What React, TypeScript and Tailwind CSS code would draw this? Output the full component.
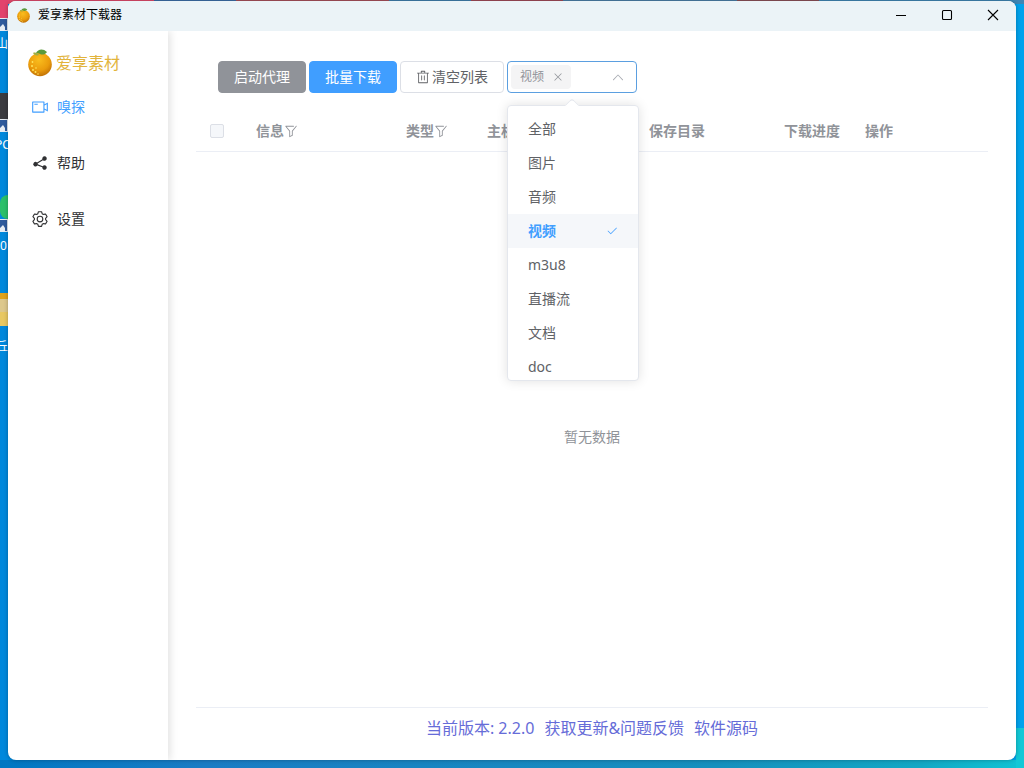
import { useState } from "react";
import type { ReactNode } from "react";

const icons = {
  video:
    "M704 768V256H128v512zm64-416 192-96v512l-192-96v128a32 32 0 0 1-32 32H96a32 32 0 0 1-32-32V224a32 32 0 0 1 32-32h640a32 32 0 0 1 32 32zm0 71.552v176.896l128 64V359.552zM192 320h192v64H192z",
  share:
    "m679.872 348.8-301.76 188.608a127.808 127.808 0 0 1 5.12 52.16l279.936 104.96a128 128 0 1 1-22.464 59.904l-279.872-104.96a128 128 0 1 1-16.64-166.272l301.696-188.608a128 128 0 1 1 33.92 54.272z",
  setting:
    "M600.704 64a32 32 0 0 1 30.464 22.208l35.2 109.376c14.784 7.232 28.928 15.36 42.432 24.512l112.384-24.192a32 32 0 0 1 34.432 15.36L944.32 364.8a32 32 0 0 1-4.032 37.504l-77.12 85.12a357.12 357.12 0 0 1 0 49.024l77.12 85.248a32 32 0 0 1 4.032 37.504l-88.704 153.6a32 32 0 0 1-34.432 15.296L708.8 803.904c-13.44 9.088-27.648 17.28-42.368 24.512l-35.264 109.376A32 32 0 0 1 600.704 960H423.296a32 32 0 0 1-30.464-22.208L357.696 828.48a351.616 351.616 0 0 1-42.56-24.64l-112.32 24.256a32 32 0 0 1-34.432-15.36L79.68 659.2a32 32 0 0 1 4.032-37.504l77.12-85.248a357.12 357.12 0 0 1 0-48.896l-77.12-85.248A32 32 0 0 1 79.68 364.8l88.704-153.6a32 32 0 0 1 34.432-15.296l112.32 24.256c13.568-9.152 27.776-17.408 42.56-24.64l35.2-109.312A32 32 0 0 1 423.232 64H600.64zm-23.424 64H446.72l-36.352 113.088-24.512 11.968a294.113 294.113 0 0 0-34.816 20.096l-22.656 15.36-116.224-25.088-65.28 113.152 79.68 88.192-1.92 27.136a293.12 293.12 0 0 0 0 40.192l1.92 27.136-79.808 88.192 65.344 113.152 116.224-25.024 22.656 15.296a294.113 294.113 0 0 0 34.816 20.096l24.512 11.968L446.72 896h130.688l36.48-113.152 24.448-11.904a288.282 288.282 0 0 0 34.752-20.096l22.592-15.296 116.288 25.024 65.28-113.152-79.744-88.192 1.92-27.136a293.12 293.12 0 0 0 0-40.256l-1.92-27.136 79.808-88.128-65.344-113.152-116.288 24.96-22.592-15.232a287.616 287.616 0 0 0-34.752-20.096l-24.448-11.904L577.344 128zM512 320a192 192 0 1 1 0 384 192 192 0 0 1 0-384m0 64a128 128 0 1 0 0 256 128 128 0 0 0 0-256",
  trash:
    "M160 256H96a32 32 0 0 1 0-64h256V95.936a32 32 0 0 1 32-32h256a32 32 0 0 1 32 32V192h256a32 32 0 1 1 0 64h-64v672a32 32 0 0 1-32 32H192a32 32 0 0 1-32-32zm448-64v-64H416v64zM224 896h576V256H224zm192-128a32 32 0 0 1-32-32V416a32 32 0 0 1 64 0v320a32 32 0 0 1-32 32m192 0a32 32 0 0 1-32-32V416a32 32 0 0 1 64 0v320a32 32 0 0 1-32 32",
  filter:
    "M384 523.392V928a32 32 0 0 0 46.336 28.608l192-96A32 32 0 0 0 640 832V523.392l280.768-343.104a32 32 0 1 0-49.536-40.576l-288 352A32 32 0 0 0 576 512v300.224l-128 64V512a32 32 0 0 0-7.232-20.288L195.52 192H704a32 32 0 1 0 0-64H128a32 32 0 0 0-24.768 52.288z",
  close:
    "M764.288 214.592 512 466.88 259.712 214.592a31.936 31.936 0 0 0-45.12 45.12L466.752 512 214.528 764.224a31.936 31.936 0 1 0 45.12 45.184L512 557.184l252.288 252.288a31.936 31.936 0 0 0 45.12-45.12L557.12 512.064l252.288-252.352a31.936 31.936 0 1 0-45.12-45.184z",
  arrowUp:
    "m488.832 344.32-339.84 356.672a32 32 0 0 0 0 44.16l.384.384a29.44 29.44 0 0 0 42.688 0l320-335.872 319.872 335.872a29.44 29.44 0 0 0 42.688 0l.384-.384a32 32 0 0 0 0-44.16L535.168 344.32a32 32 0 0 0-46.336 0",
  check:
    "M406.656 706.944 195.84 496.256a32 32 0 1 0-45.248 45.248l256 256 512-512a32 32 0 0 0-45.248-45.248L406.592 706.944z",
};

const menu = [
  { label: "嗅探", icon: icons.video },
  { label: "帮助", icon: icons.share },
  { label: "设置", icon: icons.setting },
];

const types = ["全部", "图片", "音频", "视频", "m3u8", "直播流", "文档", "doc"];

export default function App() {
  return (
    <div className="relative flex min-h-screen flex-col overflow-hidden bg-[linear-gradient(90deg,#0088dc,#0091e2_50%,#00a2ec)] px-2 pt-px pb-2 font-['Noto_Sans','Noto_Sans_CJK_SC',sans-serif] text-sm text-[#303133]">
      <Desktop />
      <div className="relative flex flex-1 flex-col overflow-hidden rounded-lg bg-white shadow-[0_0_4px_rgba(0,0,0,0.3)]">
        <TitleBar />
        <div className="flex flex-1 overflow-hidden">
          <Sidebar />
          <main className="flex min-w-0 flex-1 flex-col px-7 pt-[30px]">
            <Toolbar />
            <ResourceTable />
            <footer className="flex h-[52px] items-center justify-center gap-[10px] pb-3 text-base text-[#666cd8]">
              <span>当前版本: 2.2.0</span>
              <a href="#update">获取更新&amp;问题反馈</a>
              <a href="#source">软件源码</a>
            </footer>
          </main>
        </div>
      </div>
    </div>
  );
}

function TitleBar() {
  return (
    <header className="flex h-[30px] items-center bg-[#ebf3f7] pb-0.5 pl-[9px] text-xs text-black">
      <Orange className="h-[15px] w-[13px]" />
      <h1 className="ml-2 flex-1">爱享素材下载器</h1>
      <WindowButton label="最小化">
        <path d="M0 5.5h10" />
      </WindowButton>
      <WindowButton label="最大化">
        <rect x="0.5" y="0.5" width="9" height="9" rx="1" />
      </WindowButton>
      <WindowButton label="关闭">
        <path d="m0 0 10 10M10 0 0 10" />
      </WindowButton>
    </header>
  );
}

function WindowButton({ label, children }: { label: string; children: ReactNode }) {
  return (
    <button aria-label={label} className="flex h-full w-[46px] items-center justify-center">
      <svg viewBox="0 0 10 10" className="h-[10px] w-[10px] overflow-visible" fill="none" stroke="#000" strokeWidth="1.1">
        {children}
      </svg>
    </button>
  );
}

function Sidebar() {
  return (
    <aside className="w-40 shrink-0 pt-4 shadow-[2px_0_8px_rgba(0,0,0,0.12)]">
      <div className="flex h-8 items-center gap-1 pl-5 text-base text-[#e2b43c]">
        <Orange className="h-7 w-6" />
        <span>爱享素材</span>
      </div>
      <nav>
        {menu.map((item, i) => (
          <a
            key={item.label}
            href="#"
            className={`flex h-14 items-center gap-[5px] pl-5 ${i === 0 ? "text-[#409eff]" : "text-[#303133]"}`}
          >
            <span className="flex w-6 justify-center">
              <Icon d={item.icon} className="h-[18px] w-[18px]" />
            </span>
            {item.label}
          </a>
        ))}
      </nav>
    </aside>
  );
}

function Toolbar() {
  return (
    <div className="flex gap-[3px] pl-[22px]">
      <button className="h-8 rounded border border-[#909399] bg-[#909399] px-[15px] text-white">启动代理</button>
      <button className="h-8 rounded border border-[#409eff] bg-[#409eff] px-[15px] text-white">批量下载</button>
      <button className="flex h-8 items-center gap-0.5 rounded border border-[#dcdfe6] px-[15px] text-[#606266]">
        <Icon d={icons.trash} className="h-[14px] w-[14px]" />
        清空列表
      </button>
      <TypeSelect />
    </div>
  );
}

function TypeSelect() {
  const [open, setOpen] = useState(true);
  const [selected, setSelected] = useState(["视频"]);

  const toggle = (type: string) =>
    setSelected((prev) => (prev.includes(type) ? prev.filter((t) => t !== type) : [...prev, type]));

  return (
    <div className="relative">
      <div className="flex h-8 w-[130px] items-center rounded border border-[#5b9fe0] bg-white pr-[11px] pl-[3px]">
        {selected.slice(0, 1).map((type) => (
          <span key={type} className="flex h-6 shrink-0 items-center gap-2 rounded bg-[#f4f4f5] pr-[7px] pl-[9px] text-xs text-[#909399]">
            {type}
            <button aria-label={`移除${type}`} onClick={() => toggle(type)}>
              <Icon d={icons.close} className="h-3 w-3" />
            </button>
          </span>
        ))}
        <input
          role="combobox"
          aria-label="资源类型"
          aria-expanded={open}
          aria-controls="type-options"
          className="h-full min-w-0 flex-1 cursor-pointer outline-none"
          readOnly
          onClick={() => setOpen(!open)}
        />
        <Icon d={icons.arrowUp} className={`h-[14px] w-[14px] shrink-0 text-[#a8abb2] ${open ? "" : "rotate-180"}`} />
      </div>

      {open && (
        <div className="absolute top-11 left-0 z-10 w-[132px] rounded border border-[#e4e7ed] bg-white shadow-[0_0_12px_rgba(0,0,0,0.12)]">
          <span className="absolute -top-[6px] left-[59px] h-[10px] w-[10px] rotate-45 rounded-tl-sm border-t border-l border-[#e4e7ed] bg-white" />
          <ul id="type-options" role="listbox" aria-multiselectable className="relative h-[274px] overflow-hidden pt-[6px] text-[#606266]">
            {types.map((type) => {
              const active = selected.includes(type);
              return (
                <li
                  key={type}
                  role="option"
                  aria-selected={active}
                  onClick={() => toggle(type)}
                  className={`flex h-[34px] cursor-pointer items-center justify-between px-5 ${active ? "bg-[#f5f7fa] font-bold text-[#409eff]" : ""}`}
                >
                  {type}
                  {active && <Icon d={icons.check} className="h-3 w-3" />}
                </li>
              );
            })}
          </ul>
        </div>
      )}
    </div>
  );
}

function ResourceTable() {
  return (
    <div className="mt-[18px] flex flex-1 flex-col border-b border-[#ebeef5]">
      <table className="w-full table-fixed text-left text-[#909399]">
        <thead>
          <tr className="h-10 border-b border-[#ebeef5]">
            <th className="w-12 pl-[14px]">
              <input
                type="checkbox"
                disabled
                aria-label="全选"
                className="block h-[14px] w-[14px] appearance-none rounded-xs border border-[#dcdfe6] bg-[#f5f7fa]"
              />
            </th>
            <th className="w-[150px] px-3">
              <FilterHead label="信息" />
            </th>
            <th className="w-[81px] pl-3">
              <FilterHead label="类型" />
            </th>
            <th className="w-[162px] px-3">主机</th>
            <th className="w-[135px] px-3">保存目录</th>
            <th className="w-[81px] pl-3">下载进度</th>
            <th className="px-3">操作</th>
          </tr>
        </thead>
      </table>
      <p className="flex flex-1 items-center justify-center pt-4 text-[#909399]">暂无数据</p>
    </div>
  );
}

function FilterHead({ label }: { label: string }) {
  return (
    <span className="flex items-center">
      {label}
      <button aria-label={`筛选${label}`}>
        <Icon d={icons.filter} className="block h-[14px] w-[14px]" />
      </button>
    </span>
  );
}

function Icon({ d, className }: { d: string; className?: string }) {
  return (
    <svg viewBox="0 0 1024 1024" fill="currentColor" className={className} aria-hidden="true">
      <path d={d} />
    </svg>
  );
}

function Orange({ className }: { className?: string }) {
  return (
    <svg viewBox="0 0 24 28" className={className} aria-hidden="true">
      <defs>
        <radialGradient id="peel" cx="0.45" cy="0.3" r="0.75">
          <stop offset="0" stopColor="#f9bd1e" />
          <stop offset="0.6" stopColor="#eb9c0c" />
          <stop offset="1" stopColor="#b96a04" />
        </radialGradient>
      </defs>
      <ellipse cx="12" cy="15.5" rx="11.8" ry="11.8" fill="url(#peel)" />
      <path d="M8 4c2-4 7-5 11-1-2 3-5 3-7 2-1-1-3-1-4-1z" fill="#5b9a3c" />
      <path d="M5 4c2-1 5 0 6 2-2 1-5 0-6-2z" fill="#9fae45" />
      <g fill="#ffe45c">
        <circle cx="4.5" cy="13" r="0.9" />
        <circle cx="4" cy="17" r="1" />
        <circle cx="5" cy="21" r="1" />
        <circle cx="8" cy="19" r="0.8" />
        <circle cx="7.5" cy="23" r="1" />
        <circle cx="10" cy="25" r="0.8" />
      </g>
    </svg>
  );
}

// Wallpaper and the icons that peek out around the window
function Desktop() {
  return (
    <div className="absolute inset-0 text-xs text-white" aria-hidden="true">
      <div className="absolute inset-x-0 top-0 h-1 bg-[linear-gradient(90deg,#e04a6c_0_15%,#3c6ea8_15%_23%,#a8505c_23%_38%,#3f7fae_38%_46%,#a04a58_46%_55%,#4b7fa8_55%_72%,#8a5058_72%_80%,#3f86b4_80%)]" />
      <div className="absolute inset-x-0 bottom-0 h-2 bg-[linear-gradient(90deg,#0077c2,#1a7cc4_20%,#1590bd_70%,#12a8c4_90%,#10c4d4)]" />
      <div className="absolute right-0 bottom-0 h-10 w-2 bg-[#12c8d6]" />
      <div className="absolute top-0 left-0 h-[18px] w-2 bg-[#e2436c]" />
      <ShortcutBadge className="top-[18px]" />
      <div className="absolute top-9 left-0 w-2 overflow-hidden">
        <span className="-ml-1 block">山</span>
      </div>
      <div className="absolute top-[93px] left-0 h-[26px] w-2 bg-[#3b3b40]" />
      <ShortcutBadge className="top-[119px]" />
      <div className="absolute top-[137px] left-0 w-2 overflow-hidden">
        <span className="-ml-[5px] block">PC</span>
      </div>
      <div className="absolute top-[195px] left-0 h-[24px] w-2 rounded-l-full bg-[#2bc06a]" />
      <ShortcutBadge className="top-[219px]" />
      <span className="absolute top-[238px] left-0">0</span>
      <div className="absolute top-[293px] left-0 h-[33px] w-2 border-t-[6px] border-[#e0a21c] bg-[linear-gradient(#ddc88c_50%,#e8c862_50%)]" />
      <div className="absolute top-[339px] left-0 w-2 overflow-hidden">
        <span className="-ml-1 block">丘</span>
      </div>
    </div>
  );
}

function ShortcutBadge({ className }: { className: string }) {
  return (
    <svg viewBox="0 0 8 13" className={`absolute left-0 h-[13px] w-2 ${className}`}>
      <rect width="8" height="13" fill="#e6ecf4" />
      <path d="M0 1h7v11H5V9L3 6 0 9z" fill="#2f5a9c" />
    </svg>
  );
}
